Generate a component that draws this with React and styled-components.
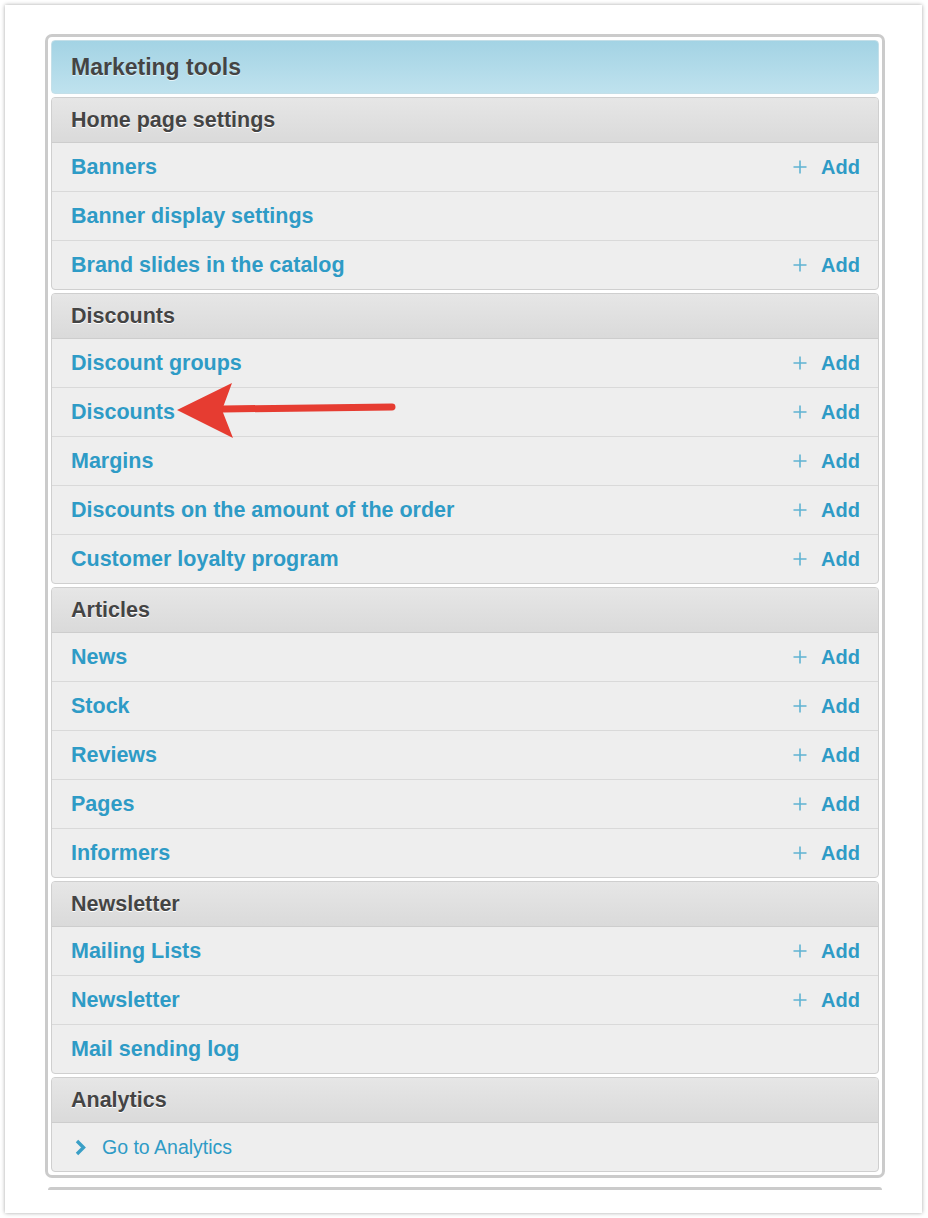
import styled, { createGlobalStyle } from 'styled-components';

const Global = createGlobalStyle`
  body {
    margin: 0;
    background: #fff;
    font-family: "Liberation Sans", Arial, sans-serif;
  }
`;

const Page = styled.div`
  padding: 5px;
`;

const Card = styled.div`
  position: relative;
  width: 917px;
  height: 1208px;
  background: #fff;
  box-shadow: 0 0 4px rgba(0, 0, 0, 0.35);
  padding: 29px 0 0 40px;
  box-sizing: border-box;
  overflow: hidden;
`;

const Panel = styled.div`
  width: 840px;
  box-sizing: border-box;
  border: 3px solid #cbcbcb;
  border-radius: 7px;
  padding: 3px;
  display: flex;
  flex-direction: column;
  gap: 3px;
`;

const NextPanel = styled.div`
  width: 834px;
  margin: 9px 0 0 3px;
  border-top: 3px solid #cbcbcb;
  border-radius: 4px 4px 0 0;
`;

const TitleBar = styled.div`
  height: 52px;
  display: flex;
  align-items: center;
  padding-left: 19px;
  border: 1px solid #c4dfe8;
  border-radius: 4px;
  background: linear-gradient(#a3d3e4, #bfe2ee);
  color: #444;
  font-size: 23px;
  font-weight: bold;
  text-shadow: 0 1px 0 rgba(255, 255, 255, 0.6);
`;

const Section = styled.div`
  border: 1px solid #cfcfcf;
  border-radius: 4px;
  background: #eeeeee;
  overflow: hidden;
`;

const SectionHead = styled.div`
  height: 44px;
  display: flex;
  align-items: center;
  padding-left: 19px;
  background: linear-gradient(#e6e6e6, #dadada);
  border-bottom: 1px solid #cdcdcd;
  color: #444;
  font-size: 21.5px;
  font-weight: bold;
  text-shadow: 0 1px 0 #fff;
`;

const Row = styled.div`
  height: 48px;
  display: flex;
  align-items: center;
  justify-content: space-between;
  padding: 0 18px 0 19px;
  & + & {
    border-top: 1px solid #d9d9d9;
  }
`;

const RowLink = styled.a`
  color: #2e9bc6;
  font-size: ${(p) => (p.$plain ? '19.5px' : '21.5px')};
  font-weight: ${(p) => (p.$plain ? 'normal' : 'bold')};
  text-decoration: none;
  display: flex;
  align-items: center;
  gap: 15px;
`;

const AddLink = styled.a`
  display: flex;
  align-items: center;
  gap: 14px;
  color: #2e9bc6;
  font-size: 20px;
  font-weight: bold;
  text-decoration: none;
`;

const ChevronBox = styled.span`
  display: flex;
  padding-left: 3px;
`;

const Arrow = styled.svg`
  position: absolute;
  left: 160px;
  top: 365px;
`;

const Plus = () => (
  <svg width="14" height="14" viewBox="0 0 14 14">
    <path d="M7 0.5v13M0.5 7h13" stroke="#5fb3d2" strokeWidth="1.6" />
  </svg>
);

const Chevron = () => (
  <ChevronBox>
    <svg width="13" height="17" viewBox="0 0 13 17">
      <path d="M3 2l6.5 6.5L3 15" fill="none" stroke="#3a9fc6" strokeWidth="3.4" />
    </svg>
  </ChevronBox>
);

const sections = [
  {
    title: 'Home page settings',
    items: [
      ['Banners', true],
      ['Banner display settings', false],
      ['Brand slides in the catalog', true],
    ],
  },
  {
    title: 'Discounts',
    items: [
      ['Discount groups', true],
      ['Discounts', true],
      ['Margins', true],
      ['Discounts on the amount of the order', true],
      ['Customer loyalty program', true],
    ],
  },
  {
    title: 'Articles',
    items: [
      ['News', true],
      ['Stock', true],
      ['Reviews', true],
      ['Pages', true],
      ['Informers', true],
    ],
  },
  {
    title: 'Newsletter',
    items: [
      ['Mailing Lists', true],
      ['Newsletter', true],
      ['Mail sending log', false],
    ],
  },
];

export default function App() {
  return (
    <Page>
      <Global />
      <Card>
        <Panel>
          <TitleBar>Marketing tools</TitleBar>
          {sections.map((s) => (
            <Section key={s.title}>
              <SectionHead>{s.title}</SectionHead>
              {s.items.map(([name, canAdd]) => (
                <Row key={name}>
                  <RowLink href="#">{name}</RowLink>
                  {canAdd && (
                    <AddLink href="#">
                      <Plus />
                      Add
                    </AddLink>
                  )}
                </Row>
              ))}
            </Section>
          ))}
          <Section>
            <SectionHead>Analytics</SectionHead>
            <Row>
              <RowLink href="#" $plain>
                <Chevron />
                Go to Analytics
              </RowLink>
            </Row>
          </Section>
        </Panel>
        <NextPanel />
        <Arrow width="240" height="80" viewBox="0 0 240 80">
          <path
            d="M58 39 L227 37"
            stroke="#e63c31"
            strokeWidth="7"
            strokeLinecap="round"
            fill="none"
          />
          <path d="M12 40 L67 13 L57 40 L68 68 Z" fill="#e63c31" />
        </Arrow>
      </Card>
    </Page>
  );
}
